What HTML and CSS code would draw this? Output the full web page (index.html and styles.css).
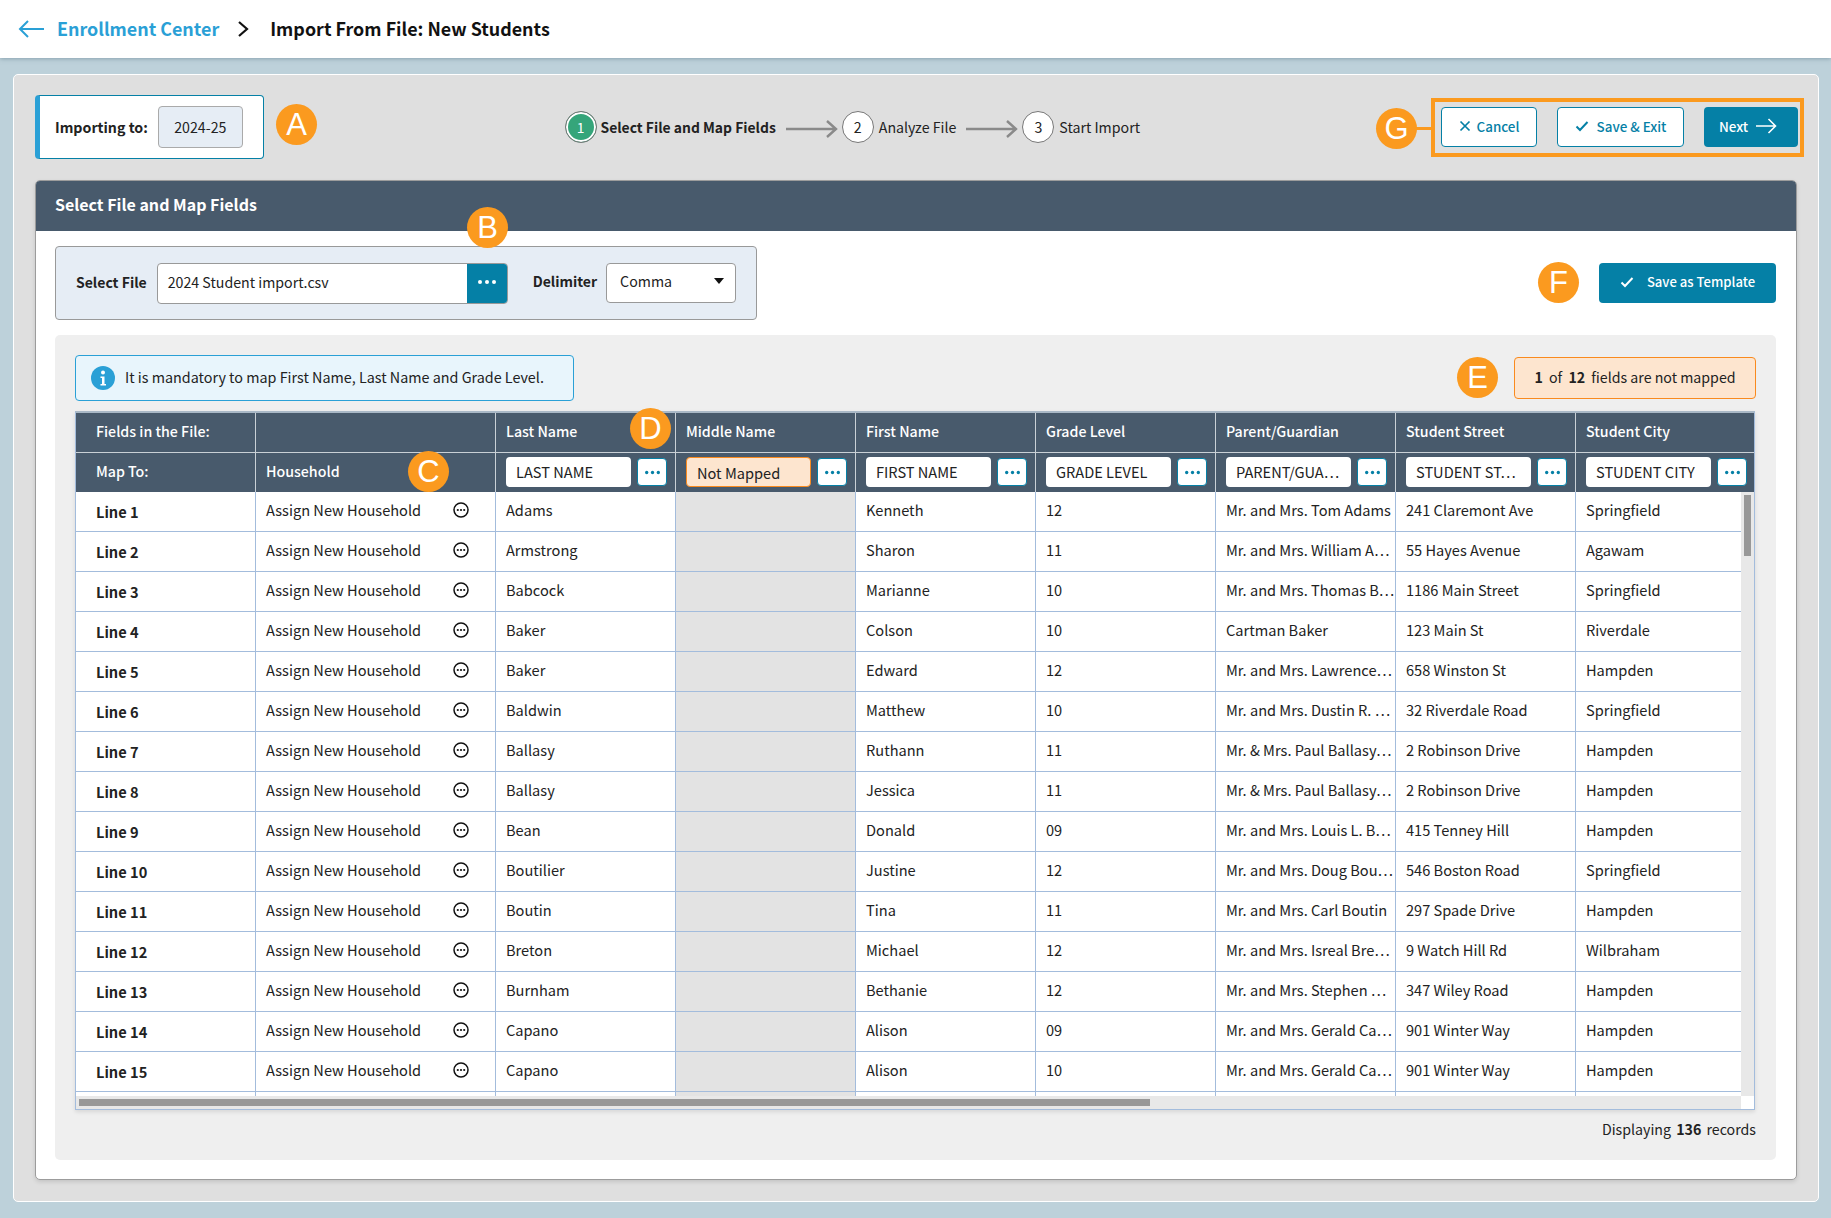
FILE: index.html
```html
<!DOCTYPE html>
<html lang="en">
<head>
<meta charset="utf-8">
<title>Import From File: New Students</title>
<link rel="stylesheet" href="styles.css">
</head>
<body>
<svg class="defs" width="0" height="0" aria-hidden="true">
  <symbol id="more" viewBox="0 0 16 16">
    <circle cx="8" cy="8" r="7" fill="none" stroke="#111" stroke-width="1.5"/>
    <circle cx="4.8" cy="8" r="1.1" fill="#111"/><circle cx="8" cy="8" r="1.1" fill="#111"/><circle cx="11.2" cy="8" r="1.1" fill="#111"/>
  </symbol>
  <symbol id="dots" viewBox="0 0 20 6">
    <circle cx="3" cy="3" r="2"/><circle cx="10" cy="3" r="2"/><circle cx="17" cy="3" r="2"/>
  </symbol>
  <symbol id="check" viewBox="0 0 14 12">
    <path d="M1.5 6.5 5 10l7.5-8" fill="none" stroke="currentColor" stroke-width="2"/>
  </symbol>
  <symbol id="step-arrow" viewBox="0 0 52 20">
    <path d="M0 10h50M41 2l9 8-9 8" fill="none" stroke="#8a8a8a" stroke-width="2.4"/>
  </symbol>
</svg>

<header class="topbar">
  <svg class="back" width="26" height="18" viewBox="0 0 26 18"><path d="M26 9H2M10 1 2 9l8 8" fill="none" stroke="#2aa0d6" stroke-width="2"/></svg>
  <a class="crumb">Enrollment Center</a>
  <svg class="chev" width="12" height="18" viewBox="0 0 12 18"><path d="M2 2l8 7-8 7" fill="none" stroke="#111" stroke-width="2.2"/></svg>
  <h1 class="title">Import From File: New Students</h1>
</header>

<main class="page">
  <div class="panel">
    <div class="toolbar">
      <div class="importing">
        <span class="importing-label">Importing to:</span>
        <span class="year">2024-25</span>
      </div>
      <ol class="steps">
        <li class="step step-active"><span class="num">1</span><span>Select File and Map Fields</span></li>
        <li class="arrow"><svg width="52" height="20"><use href="#step-arrow"/></svg></li>
        <li class="step"><span class="num">2</span><span>Analyze File</span></li>
        <li class="arrow"><svg width="52" height="20"><use href="#step-arrow"/></svg></li>
        <li class="step"><span class="num">3</span><span>Start Import</span></li>
      </ol>
      <div class="actions">
        <button class="btn btn-outline btn-cancel"><svg width="12" height="12" viewBox="0 0 12 12"><path d="M1.5 1.5l9 9M10.500 1.500l-9 9" fill="none" stroke="currentColor" stroke-width="1.7"/></svg>Cancel</button>
        <button class="btn btn-outline btn-save"><svg width="14" height="12"><use href="#check"/></svg>Save &amp; Exit</button>
        <button class="btn btn-solid btn-next">Next<svg width="21" height="16" viewBox="0 0 21 16"><path d="M0 8h19.500M12.500 1l7 7-7 7" fill="none" stroke="#fff" stroke-width="1.600"/></svg></button>
      </div>
    </div>

    <section class="card">
      <h2 class="card-head">Select File and Map Fields</h2>
      <div class="card-body">
        <div class="file-row">
          <div class="file-box">
            <label class="file-label">Select File</label>
            <div class="file-input"><span class="file-name">2024 Student import.csv</span><span class="file-btn"><svg width="20" height="6" fill="#fff"><use href="#dots"/></svg></span></div>
            <label class="delim-label">Delimiter</label>
            <div class="select"><span>Comma</span><i class="caret"></i></div>
          </div>
          <button class="btn btn-solid btn-template"><svg width="14" height="12"><use href="#check"/></svg>Save as Template</button>
        </div>

        <div class="mapping">
          <div class="notices">
            <div class="info"><svg width="24" height="24" viewBox="0 0 24 24"><circle cx="12" cy="12" r="12" fill="#2aa0d6"/><circle cx="12" cy="6.500" r="2" fill="#fff"/><path d="M9.500 10.500h4v7.500h1.500v1.500H9.500V18H11v-6H9.500z" fill="#fff"/></svg><span>It is mandatory to map First Name, Last Name and Grade Level.</span></div>
            <div class="unmapped"><b>1</b> of <b>12</b> fields are not mapped</div>
          </div>

          <div class="grid">
            <div class="row head head-1">
              <div class="c first">Fields in the File:</div><div class="c"></div>
              <div class="c">Last Name</div><div class="c">Middle Name</div><div class="c">First Name</div><div class="c">Grade Level</div><div class="c">Parent/Guardian</div><div class="c">Student Street</div><div class="c">Student City</div>
            </div>
            <div class="row head head-2">
              <div class="c first">Map To:</div><div class="c">Household</div>
              <div class="c"><span class="map">LAST NAME</span><span class="map-btn"><svg width="17" height="5" fill="#0580a6"><use href="#dots"/></svg></span></div>
              <div class="c"><span class="map map-off">Not Mapped</span><span class="map-btn"><svg width="17" height="5" fill="#0580a6"><use href="#dots"/></svg></span></div>
              <div class="c"><span class="map">FIRST NAME</span><span class="map-btn"><svg width="17" height="5" fill="#0580a6"><use href="#dots"/></svg></span></div>
              <div class="c"><span class="map">GRADE LEVEL</span><span class="map-btn"><svg width="17" height="5" fill="#0580a6"><use href="#dots"/></svg></span></div>
              <div class="c"><span class="map">PARENT/GUA…</span><span class="map-btn"><svg width="17" height="5" fill="#0580a6"><use href="#dots"/></svg></span></div>
              <div class="c"><span class="map">STUDENT ST…</span><span class="map-btn"><svg width="17" height="5" fill="#0580a6"><use href="#dots"/></svg></span></div>
              <div class="c"><span class="map">STUDENT CITY</span><span class="map-btn"><svg width="17" height="5" fill="#0580a6"><use href="#dots"/></svg></span></div>
            </div>
            <div class="body-wrap">
              <div class="rows">
                <div class="row"><div class="c first line">Line 1</div><div class="c hh">Assign New Household<svg width="16" height="16"><use href="#more"/></svg></div><div class="c">Adams</div><div class="c off"></div><div class="c">Kenneth</div><div class="c">12</div><div class="c">Mr. and Mrs. Tom Adams</div><div class="c">241 Claremont Ave</div><div class="c">Springfield</div></div>
                <div class="row"><div class="c first line">Line 2</div><div class="c hh">Assign New Household<svg width="16" height="16"><use href="#more"/></svg></div><div class="c">Armstrong</div><div class="c off"></div><div class="c">Sharon</div><div class="c">11</div><div class="c">Mr. and Mrs. William A…</div><div class="c">55 Hayes Avenue</div><div class="c">Agawam</div></div>
                <div class="row"><div class="c first line">Line 3</div><div class="c hh">Assign New Household<svg width="16" height="16"><use href="#more"/></svg></div><div class="c">Babcock</div><div class="c off"></div><div class="c">Marianne</div><div class="c">10</div><div class="c">Mr. and Mrs. Thomas B…</div><div class="c">1186 Main Street</div><div class="c">Springfield</div></div>
                <div class="row"><div class="c first line">Line 4</div><div class="c hh">Assign New Household<svg width="16" height="16"><use href="#more"/></svg></div><div class="c">Baker</div><div class="c off"></div><div class="c">Colson</div><div class="c">10</div><div class="c">Cartman Baker</div><div class="c">123 Main St</div><div class="c">Riverdale</div></div>
                <div class="row"><div class="c first line">Line 5</div><div class="c hh">Assign New Household<svg width="16" height="16"><use href="#more"/></svg></div><div class="c">Baker</div><div class="c off"></div><div class="c">Edward</div><div class="c">12</div><div class="c">Mr. and Mrs. Lawrence…</div><div class="c">658 Winston St</div><div class="c">Hampden</div></div>
                <div class="row"><div class="c first line">Line 6</div><div class="c hh">Assign New Household<svg width="16" height="16"><use href="#more"/></svg></div><div class="c">Baldwin</div><div class="c off"></div><div class="c">Matthew</div><div class="c">10</div><div class="c">Mr. and Mrs. Dustin R. …</div><div class="c">32 Riverdale Road</div><div class="c">Springfield</div></div>
                <div class="row"><div class="c first line">Line 7</div><div class="c hh">Assign New Household<svg width="16" height="16"><use href="#more"/></svg></div><div class="c">Ballasy</div><div class="c off"></div><div class="c">Ruthann</div><div class="c">11</div><div class="c">Mr. &amp; Mrs. Paul Ballasy…</div><div class="c">2 Robinson Drive</div><div class="c">Hampden</div></div>
                <div class="row"><div class="c first line">Line 8</div><div class="c hh">Assign New Household<svg width="16" height="16"><use href="#more"/></svg></div><div class="c">Ballasy</div><div class="c off"></div><div class="c">Jessica</div><div class="c">11</div><div class="c">Mr. &amp; Mrs. Paul Ballasy…</div><div class="c">2 Robinson Drive</div><div class="c">Hampden</div></div>
                <div class="row"><div class="c first line">Line 9</div><div class="c hh">Assign New Household<svg width="16" height="16"><use href="#more"/></svg></div><div class="c">Bean</div><div class="c off"></div><div class="c">Donald</div><div class="c">09</div><div class="c">Mr. and Mrs. Louis L. B…</div><div class="c">415 Tenney Hill</div><div class="c">Hampden</div></div>
                <div class="row"><div class="c first line">Line 10</div><div class="c hh">Assign New Household<svg width="16" height="16"><use href="#more"/></svg></div><div class="c">Boutilier</div><div class="c off"></div><div class="c">Justine</div><div class="c">12</div><div class="c">Mr. and Mrs. Doug Bou…</div><div class="c">546 Boston Road</div><div class="c">Springfield</div></div>
                <div class="row"><div class="c first line">Line 11</div><div class="c hh">Assign New Household<svg width="16" height="16"><use href="#more"/></svg></div><div class="c">Boutin</div><div class="c off"></div><div class="c">Tina</div><div class="c">11</div><div class="c">Mr. and Mrs. Carl Boutin</div><div class="c">297 Spade Drive</div><div class="c">Hampden</div></div>
                <div class="row"><div class="c first line">Line 12</div><div class="c hh">Assign New Household<svg width="16" height="16"><use href="#more"/></svg></div><div class="c">Breton</div><div class="c off"></div><div class="c">Michael</div><div class="c">12</div><div class="c">Mr. and Mrs. Isreal Bre…</div><div class="c">9 Watch Hill Rd</div><div class="c">Wilbraham</div></div>
                <div class="row"><div class="c first line">Line 13</div><div class="c hh">Assign New Household<svg width="16" height="16"><use href="#more"/></svg></div><div class="c">Burnham</div><div class="c off"></div><div class="c">Bethanie</div><div class="c">12</div><div class="c">Mr. and Mrs. Stephen …</div><div class="c">347 Wiley Road</div><div class="c">Hampden</div></div>
                <div class="row"><div class="c first line">Line 14</div><div class="c hh">Assign New Household<svg width="16" height="16"><use href="#more"/></svg></div><div class="c">Capano</div><div class="c off"></div><div class="c">Alison</div><div class="c">09</div><div class="c">Mr. and Mrs. Gerald Ca…</div><div class="c">901 Winter Way</div><div class="c">Hampden</div></div>
                <div class="row"><div class="c first line">Line 15</div><div class="c hh">Assign New Household<svg width="16" height="16"><use href="#more"/></svg></div><div class="c">Capano</div><div class="c off"></div><div class="c">Alison</div><div class="c">10</div><div class="c">Mr. and Mrs. Gerald Ca…</div><div class="c">901 Winter Way</div><div class="c">Hampden</div></div>
                <div class="row"><div class="c first"></div><div class="c"></div><div class="c"></div><div class="c off"></div><div class="c"></div><div class="c"></div><div class="c"></div><div class="c"></div><div class="c"></div></div>
              </div>
              <div class="vbar"><div class="vthumb"></div></div>
            </div>
            <div class="hbar-row">
              <div class="hbar"><div class="hthumb"></div></div>
              <div class="corner"></div>
            </div>
          </div>
          <p class="count">Displaying <b>136</b> records</p>
        </div>
      </div>
    </section>
  </div>

  <div class="frame-g"></div>
  <div class="link-g"></div>
  <span class="badge badge-a">A</span>
  <span class="badge badge-b">B</span>
  <span class="badge badge-c">C</span>
  <span class="badge badge-d">D</span>
  <span class="badge badge-e">E</span>
  <span class="badge badge-f">F</span>
  <span class="badge badge-g">G</span>
</main>
</body>
</html>
```
FILE: styles.css
```css
* { box-sizing: border-box; }
html, body { margin: 0; padding: 0; }
body {
  width: 1831px;
  height: 1218px;
  overflow: hidden;
  background: #bdd1da;
  color: #222;
  font-family: "Noto Sans CJK JP", "Noto Sans", sans-serif;
  font-size: 14.6px;
  line-height: 20px;
}
.defs { position: absolute; }

/* top bar */
.topbar {
  height: 58px;
  background: #fff;
  display: flex;
  align-items: center;
  padding: 0 0 1px 18px;
  box-shadow: 0 1px 4px rgba(90, 120, 135, .5);
}
.crumb { margin: 0 0 2px 13px; font-size: 17.9px; font-weight: 700; color: #2aa0d6; }
.chev { margin-left: 18px; }
.title { margin: 0 0 2px 21px; font-size: 17.9px; font-weight: 700; color: #111; }

/* page */
.page { position: relative; padding: 16px 12px 16px 13px; height: 1160px; }
.panel {
  height: 1128px;
  background: #dfdfdf;
  border: 1px solid #fff;
  border-radius: 5px;
  padding: 20px 21px 21px;
}
.toolbar { display: flex; justify-content: space-between; align-items: center; height: 64px; width: 1763px; }
.importing {
  width: 229px;
  height: 64px;
  background: #fff;
  border: 1px solid #0580a6;
  border-left: 5px solid #2aa0d6;
  border-radius: 4px;
  display: flex;
  align-items: center;
  padding-left: 15px;
}
.importing-label { font-weight: 700; font-size: 14.2px; }
.year {
  margin-left: 10px;
  width: 85px;
  height: 42px;
  background: #e6edf5;
  border: 1px solid #aaa;
  border-radius: 4px;
  display: flex;
  align-items: center;
  justify-content: center;
  font-size: 14.2px;
}

/* stepper */
.steps { list-style: none; margin: 0; padding: 0; display: flex; align-items: center; width: 576px; white-space: nowrap; font-size: 14.2px; }
.step { display: flex; align-items: center; gap: 5px; flex: none; }
.num {
  width: 32px;
  height: 32px;
  border-radius: 50%;
  background: #fff;
  border: 1px solid #777;
  display: flex;
  align-items: center;
  justify-content: center;
}
.step-active { font-weight: 700; gap: 4px; font-size: 13.9px; }
.step-active .num {
  background: #35a57a;
  color: #fff;
  font-weight: 400;
  box-shadow: inset 0 0 0 2px #fff;
}
.arrow { margin: 4px 4px 0 10px; height: 20px; flex: none; }

/* buttons */
.actions { display: flex; width: 357px; gap: 20px; }
.btn {
  height: 40px;
  border-radius: 4px;
  font: inherit;
  font-weight: 500;
  font-size: 13.4px;
  display: flex;
  align-items: center;
  justify-content: center;
  padding: 0 0 2px;
  cursor: pointer;
}
.btn-outline { background: #fff; border: 1px solid #0580a6; color: #0580a6; }
.btn-solid { background: #0580a6; border: 0; color: #fff; }
.btn-cancel { width: 96px; gap: 6px; }
.btn-save { width: 127px; gap: 8px; }
.btn-next { width: 94px; gap: 8px; padding-right: 6px; }

/* card */
.card {
  margin-top: 21px;
  height: 1000px;
  background: #fff;
  border: 1px solid #9c9c9c;
  border-radius: 5px;
  overflow: hidden;
  box-shadow: 0 2px 4px rgba(0, 0, 0, .12);
}
.card-head {
  margin: 0;
  height: 50px;
  background: #485a6c;
  color: #fff;
  font-size: 16px;
  font-weight: 700;
  display: flex;
  align-items: center;
  padding: 0 0 4px 19px;
}
.card-body { padding: 15px 20px 20px 19px; }
.file-row { display: flex; justify-content: space-between; align-items: center; }
.file-box {
  width: 702px;
  height: 74px;
  background: #e6edf5;
  border: 1px solid #999;
  border-radius: 4px;
  display: flex;
  align-items: center;
  padding-left: 20px;
}
.file-label { font-weight: 700; font-size: 14px; padding-bottom: 2px; }
.file-input {
  margin-left: 10px;
  width: 351px;
  height: 41px;
  background: #fff;
  border: 1px solid #999;
  border-radius: 4px;
  display: flex;
  align-items: center;
  overflow: hidden;
}
.file-name { flex: 1; padding: 0 0 2px 10px; font-size: 14.2px; }
.file-btn { width: 40px; height: 100%; background: #0580a6; display: flex; align-items: center; justify-content: center; padding-bottom: 3px; }
.delim-label { margin-left: 25px; font-weight: 700; font-size: 14px; padding-bottom: 4px; }
.select {
  margin-left: 9px;
  width: 130px;
  height: 40px;
  background: #fff;
  border: 1px solid #999;
  border-radius: 4px;
  display: flex;
  align-items: center;
  justify-content: space-between;
  padding: 0 11px 4px 13px;
  font-size: 14.2px;
}
.caret { width: 0; height: 0; border: 5px solid transparent; border-top: 6px solid #111; border-bottom: 0; margin-top: -1px; }
.btn-template { width: 177px; gap: 13px; padding-bottom: 3px; font-size: 13.1px; }

/* mapping section */
.mapping {
  margin-top: 15px;
  height: 825px;
  background: #efefef;
  border-radius: 5px;
  padding: 20px 20px 0;
}
.notices { display: flex; justify-content: space-between; align-items: center; height: 46px; }
.info {
  width: 499px;
  height: 46px;
  background: #e8f5fc;
  border: 1px solid #2aa0d6;
  border-radius: 4px;
  display: flex;
  align-items: center;
  gap: 10px;
  padding-left: 15px;
  font-size: 14.35px;
}
.info span { padding-bottom: 2px; }
.unmapped {
  width: 242px;
  height: 42px;
  background: #fde5cf;
  border: 1px solid #f98a1e;
  border-radius: 4px;
  display: flex;
  align-items: center;
  justify-content: center;
  white-space: pre;
  font-size: 14.2px;
  padding-bottom: 2px;
}
.unmapped b { font-weight: 700; margin: 0 3px 0 0; }
.unmapped b + b { margin: 0 3px; }

/* table */
.grid {
  margin-top: 10px;
  width: 1680px;
  height: 699px;
  border: 1px solid #a3bcdc;
  border-top: 2px solid #a9b8c6;
  overflow: hidden;
  box-shadow: 0 2px 4px rgba(0, 0, 0, .1);
}
.row {
  display: grid;
  grid-template-columns: 180px 240px repeat(6, 180px) 1fr;
  height: 40px;
}
.c {
  display: flex;
  align-items: center;
  padding: 0 0 4px 10px;
  white-space: nowrap;
  overflow: hidden;
  border-right: 1px solid #a3bcdc;
  border-bottom: 1px solid #a3bcdc;
  background: #fff;
}
.c:last-child { border-right: 0; }
.first { padding-left: 20px; }
.line { font-weight: 700; padding-top: 0; padding-bottom: 0; }
.off { background: #e3e3e3; }
.hh { justify-content: space-between; padding-right: 26px; }

.head .c { background: #485a6c; color: #fff; border-color: #c9d0d6; font-weight: 500; font-size: 14.2px; }
.head-2 { height: 39px; }
.head-2 .c { border-bottom: 0; gap: 6px; padding-bottom: 1px; }
.head-2 .c:nth-child(-n+2) { padding-bottom: 3px; }
.map {
  width: 125px;
  height: 30px;
  background: #fff;
  color: #222;
  border-radius: 4px;
  padding-left: 10px;
  display: flex;
  align-items: center;
  font-weight: 400;
  font-size: 14.6px;
  flex: none;
}
.map-off { background: #fde5cf; border: 1px solid #f98a1e; padding-left: 10px; padding-top: 1px; }
.map-btn {
  width: 30px;
  height: 28px;
  flex: none;
  background: #fff;
  border: 1px solid #0580a6;
  border-radius: 4px;
  display: flex;
  align-items: center;
  justify-content: center;
}
.body-wrap { display: flex; height: 604px; overflow: hidden; }
.rows { flex: 1; min-width: 0; }
.vbar { width: 13px; background: #e8e8e8; padding: 3px 3px 0; }
.vthumb { height: 61px; background: #989898; }
.hbar-row { display: flex; height: 13px; }
.hbar { flex: 1; background: #e8e8e8; padding: 3px 0 3px 3px; }
.hthumb { width: 1071px; height: 7px; background: #989898; }
.corner { width: 13px; background: #fff; }
.count { margin: 9px 0 0; text-align: right; width: 1681px; font-size: 14.2px; }
.count b { font-weight: 700; margin: 0 2px; }

/* annotations overlaid on the screenshot */
.badge {
  position: absolute;
  width: 41px;
  height: 41px;
  border-radius: 50%;
  background: #fb9a1f;
  color: #fff;
  font-family: "Liberation Sans", Arial, sans-serif;
  font-size: 31px;
  line-height: 41px;
  text-align: center;
}
.badge-a { left: 276px; top: 46px; }
.badge-b { left: 467px; top: 149px; }
.badge-c { left: 408px; top: 393px; }
.badge-d { left: 630px; top: 350px; }
.badge-e { left: 1457px; top: 299px; }
.badge-f { left: 1538px; top: 204px; }
.badge-g { left: 1376px; top: 50px; }
.frame-g { position: absolute; left: 1431px; top: 40px; width: 373px; height: 59px; border: 4px solid #fb9a1f; }
.link-g { position: absolute; left: 1415px; top: 69px; width: 17px; height: 3px; background: #fb9a1f; }
```
